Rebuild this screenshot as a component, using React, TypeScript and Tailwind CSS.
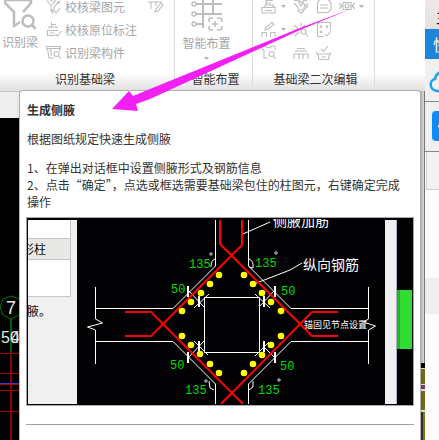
import React from "react";

interface GlyphProps {
    children: React.ReactNode;
    className?: string;
    viewBox?: string;
}

function Glyph({ children, className = "h-4 w-4", viewBox = "0 0 16 16" }: GlyphProps) {
    return (
        <svg
            viewBox={viewBox}
            className={`${className} shrink-0`}
            fill="none"
            stroke="#bdbdbd"
            strokeWidth="1.1"
            aria-hidden="true"
        >
            {children}
        </svg>
    );
}

function Caret() {
    return (
        <svg viewBox="0 0 5 3" className="h-[3px] w-[5px] shrink-0" fill="#b4b4b4" aria-hidden="true">
            <path d="M0 0h5L2.500 3z" />
        </svg>
    );
}

const checkItems = [
    {
        label: "校核梁图元",
        icon: <path d="M.5 1.500 5 6.500v5l1.500 2V10M4 2h4M10 1 6.500 6M13 2 8 8.500v4M8 12l2 2 4-5M12 5l2-3" />,
    },
    {
        label: "校核原位标注",
        icon: <path d="M5.500 0v6M5.500 2.500H10M3 6.500V5h8v1.500M.5 8.500h12M1.500 8.500v5H9M4 11h4M9.500 12l2 2 4-5" />,
    },
    {
        label: "识别梁构件",
        icon: (
            <>
                <path d="M.5 1.500h14v2h-14zM1.500 3.500l1.500 9.500h5M13.500 3.500V6M4.500 3.500l1 7" />
                <circle cx="10.500" cy="9" r="2.500" />
                <path d="m12.500 11 2.500 3" />
            </>
        ),
    },
];

const editRows = [
    [
        {
            label: "生成侧腋",
            menu: true,
            icon: <path d="M5 6V1.500h7M5 4h5M3 8.500 4.500 6H12v2.500M1 8.500h13v5.500H1zM4 11.500h7M11 6l3 2.500" />,
        },
        { label: "生成梁加腋", icon: <path d="M1 1.500h4L8 7l3-5.500h3M1 4l4 4v4l3 2 3-2V8l4-3.500M6 1.500c3 3 5 2 6 5M6 11h5M15 7l-3 3" /> },
        { label: "应用同名", icon: <path d="M4 .5h8l3 3v7l-3 3H1.500v-10zM4 6h8M4 9h8" /> },
        {
            label: "设置支座",
            menu: true,
            icon: (
                <>
                    <path d="M4 3.500h8v7H4zM0 4l3 3-3 3M16 4l-3 3 3 3M1 7h3M12 7h3" />
                    <circle cx="8" cy="7" r="2" />
                </>
            ),
        },
    ],
    [
        { label: "重提梁跨", menu: true, icon: <path d="M1 15v-4.500h4.500M9.500 10.500H14V15M5.500 15v-4.500M9.500 15v-4.500M4 8l1-3 6-4.500 2 2L7 7z" /> },
        {
            label: "查改标高",
            icon: (
                <>
                    <path d="m1 3 4 4M8 1v4M0 8h5M2 14l4-4M12 3 9 6" />
                    <circle cx="10.500" cy="9.500" r="2.500" />
                    <path d="m12.500 11.500 2.500 3" />
                </>
            ),
        },
        {
            label: "梁跨校核",
            icon: (
                <>
                    <path d="M8 14.500H1.500v-14h13V8M9 12l2 2 4-5" />
                    <circle cx="5" cy="4.500" r=".8" />
                    <circle cx="11" cy="4.500" r=".8" />
                    <circle cx="5" cy="10" r=".8" />
                </>
            ),
        },
    ],
    [
        {
            label: "查看支座",
            icon: (
                <>
                    <path d="M1 1h3l2 1.500h3L11 1h3v4M1 1v3l2 1v8h4" />
                    <circle cx="10.500" cy="9" r="2.500" />
                    <path d="m12.500 11 2 3" />
                </>
            ),
        },
        { label: "生成架立筋", icon: <path d="M4 3.500h8M2 6h12M1 14V9h14v5M6 14V9M10 14V9" /> },
        { label: "检查配筋", icon: <path d="M.5 7v2h14V7M2 9l1 5.500h9.500l1-5.500M5 12h5M5 4l2.500 2.500L12 1" /> },
    ],
];

const captionClass = "text-center text-xs leading-4 text-[#333333]";

function Ribbon() {
    return (
        <header className="flex h-[91px] shrink-0 overflow-hidden bg-white bg-gradient-to-b from-white from-80% to-[#e0e0e0]">
            <section className="mb-1 flex w-[175px] shrink-0 flex-col border-r border-[#dcdcdc]">
                <div className="-mt-[5px] flex grow">
                    <button className="flex w-[40px] flex-col items-center whitespace-nowrap pt-1 text-xs text-[#a6a6a6]">
                        <Glyph className="h-[31px] w-8" viewBox="0 0 32 31">
                            <path d="M1 0v4l9 9v14l6-4M27 0v4l-8 9M1 1h26" strokeWidth="2.500" />
                            <circle cx="24" cy="22" r="5.500" strokeWidth="2.500" />
                            <path d="m28 26 4 4" strokeWidth="2.500" />
                        </Glyph>
                        <span className="mt-1 leading-4">识别梁</span>
                    </button>
                    <div className="ml-1.5 flex flex-col">
                        {checkItems.map(({ label, icon }) => (
                            <button
                                key={label}
                                className="flex h-[23px] items-center gap-[3px] whitespace-nowrap text-xs text-[#a6a6a6]"
                            >
                                <Glyph>{icon}</Glyph>
                                {label}
                            </button>
                        ))}
                    </div>
                    <button aria-label="编辑" className="ml-auto mr-2.5 flex h-[23px] items-center">
                        <Glyph>
                            <path d="M0 3h14M3 3v7M8 3v4M7 13l1-3 5-6 2 2-5 6z" />
                        </Glyph>
                    </button>
                </div>
                <h2 className={`${captionClass} pr-1`}>识别基础梁</h2>
            </section>

            <section className="mb-1 flex w-[78px] shrink-0 flex-col border-r border-[#dcdcdc]">
                <button className="flex grow flex-col items-center pr-3.5 text-xs text-[#a6a6a6]">
                    <Glyph className="h-[31px] w-8" viewBox="0 0 32 31">
                        <path d="M5 4h26M5 14h26M5 24h8M12 0v28M22 0v14" strokeWidth="2" />
                        <g fill="white" strokeWidth="1.500">
                            <circle cx="3" cy="4" r="2" />
                            <circle cx="3" cy="14" r="2" />
                            <circle cx="3" cy="24" r="2" />
                        </g>
                        <path
                            d="M22 18h-2q-2 0-2 2v2M26 18h2q3 0 3 2v2M18 26v2q0 2 2 2h2M26 30h2q3 0 3-2v-2M24 21v6M21 24h6"
                            strokeWidth="1.500"
                        />
                    </Glyph>
                    <span className="mt-1 mb-1.5 leading-4">智能布置</span>
                    <Caret />
                </button>
                <h2 className={`${captionClass} pl-1`}>智能布置</h2>
            </section>

            <section className="mb-1 flex w-[122px] shrink-0 flex-col border-r border-[#dcdcdc]">
                <div className="-mt-[5px] flex grow flex-col pl-2">
                    {editRows.map((row, i) => (
                        <div key={i} className="flex h-[23px] items-center">
                            {row.map(({ label, icon, menu }, j) => (
                                <button
                                    key={label}
                                    aria-label={label}
                                    className={`flex items-center gap-1 ${j === 0 ? "w-8" : "w-[23px]"}`}
                                >
                                    <Glyph>{icon}</Glyph>
                                    {menu && <Caret />}
                                </button>
                            ))}
                        </div>
                    ))}
                </div>
                <h2 className={`${captionClass} pl-1`}>基础梁二次编辑</h2>
            </section>
        </header>
    );
}

function ModelView() {
    return (
        <svg
            viewBox="0 118 20 322"
            className="h-[322px] w-5"
            fill="none"
            fontFamily="'Liberation Sans', sans-serif"
            aria-hidden="true"
        >
            <path d="M11 319v34" stroke="#075c07" strokeWidth="2" />
            <path d="m11 296 8 3 4 8-4 8-8 4-8-4-3-8 3-8z" stroke="#087508" />
            <g stroke="#a40000">
                <path d="M0 353.500h20M0 373.500h20M0 390.500h20M0 411.500h20" />
                <path d="M11 353v87" strokeWidth="2" stroke="#8b0000" />
                <path d="M0 384.500h20" />
            </g>
            <path d="M0 383.500h20" stroke="#4934c8" />
            <g fill="#e8e8e8">
                <text x="6" y="314" fontSize="18">7</text>
                <text x="1" y="343" fontSize="16">5</text>
                <text x="10" y="343" fontSize="16">0</text>
                <text x="11" y="343" fontSize="16">4</text>
            </g>
        </svg>
    );
}

const bars = [
    [219, 275], [210, 284], [201, 293], [191, 302], [182, 311],
    [244, 275], [253, 284], [262, 293], [271, 302], [281, 311],
    [182, 336], [191, 345], [200, 354], [210, 364], [219, 373],
    [281, 336], [271, 345], [262, 355], [253, 364], [244, 373],
];

const dimensions: [number, number, string][] = [
    [189, 268, "135"],
    [255, 267, "135"],
    [171, 293, "50"],
    [281, 295, "50"],
    [170, 369, "50"],
    [280, 370, "50"],
    [185, 394, "135"],
    [258, 394, "135"],
];

const degreeMarks = [[211, 254], [276, 253], [206, 381], [279, 380]];

function HaunchDiagram() {
    return (
        <svg
            viewBox="28 219 384 185"
            className="block w-full bg-[#020204]"
            fill="none"
            fontFamily="'Noto Sans CJK SC', sans-serif"
            role="img"
            aria-label="侧腋配筋示意图"
        >
            <path d="M28 220h49v184H28z" fill="#f0f0f0" />
            <path d="M28 220h42v76H28z" fill="#ffffff" />
            <path d="M28 238h42v22H28z" fill="#e8e8e4" />
            <path d="M28 238.500h42M28 259.500h42M28 296.500h43M70.500 220v77" stroke="#c4c6ce" />
            <g fill="#111111" fontSize="12">
                <text x="22" y="254">形柱</text>
                <text x="27" y="316">腋。</text>
            </g>
            <path d="M385 220h11v184h-11z" fill="#f0f0f0" />
            <path d="M396.500 220v184" stroke="#aab4c0" />
            <path d="M397 290h15v59h-15z" fill="#2fdc2f" />
            <path d="M397 290h3v59h-3z" fill="#24b424" />

            <g stroke="#ffffff">
                <path d="M215.500 220v46L173 308.500H95M248.500 220v46l42.500 42.500h77.500" />
                <path d="M95 341.500h78l42.500 42.500v20M368.500 341.500H291L248.500 384v20" />
                <path d="M95.500 287v32l7 4-15 4 8 3v34M368.500 287v32l-5 3 12 4-7 4v34" />
                <path d="M204.500 297.500h55v55h-55z" />
                <path d="m243 234 27-12M254 284l36-14 12-7" />
                <path d="m188 290 16 17M194 308l15-14M275 290l-16 17M270 308l-15-14" />
                <path d="m188 358 16-17M194 341l14 14M275 358l-12-12M269 342l-14 14" />
                <path d="M215 259q-4 1-4 8M249 259q5 2 4 9l-4-1M209 381l1 7 4 2M253 381v6l-4 3" />
                <path
                    d="M188 286v11M199 296v11M275 286v11M264 296v11M199 341v11M188 352v11M264 341v11M275 352v11"
                    strokeWidth="2"
                />
            </g>
            <g stroke="#ff0000" strokeWidth="2">
                <path d="M220 220v24l92 92h26M242 220v25l-91 91h-26" />
                <path d="M125 312h26l92 92M338 312h-26l-91 92" />
            </g>
            <g fill="#ffff00">
                {bars.map(([cx, cy]) => (
                    <circle key={`${cx}-${cy}`} cx={cx} cy={cy} r="3.300" />
                ))}
            </g>
            <g fill="#00dc00" fontSize="12" fontFamily="'Liberation Mono', monospace">
                {dimensions.map(([x, y, value]) => (
                    <text key={`${x}-${y}`} x={x} y={y}>{value}</text>
                ))}
            </g>
            <g stroke="#d8d8e8">
                {degreeMarks.map(([cx, cy]) => (
                    <circle key={`${cx}-${cy}`} cx={cx} cy={cy} r="1.200" />
                ))}
            </g>
            <g fill="#ffffff">
                <text x="273" y="226" fontSize="14">侧腋加筋</text>
                <text x="303" y="270" fontSize="14">纵向钢筋</text>
                <text x="304" y="328" fontSize="9">锚固见节点设置</text>
            </g>
        </svg>
    );
}

function HelpTip() {
    return (
        <div
            role="tooltip"
            className="absolute top-[90px] right-1 bottom-0 left-[19px] overflow-hidden rounded-t-sm border border-b-0 border-[#b0b0b0] bg-white px-1.5 pt-2.5 text-xs leading-[17px] text-[#333333] shadow-md"
        >
            <div className="pr-1.5 pl-px">
                <h3 className="font-bold">生成侧腋</h3>
                <p className="mt-3">根据图纸规定快速生成侧腋</p>
                <p className="mt-3">1、在弹出对话框中设置侧腋形式及钢筋信息</p>
                <p>2、点击“确定”，点选或框选需要基础梁包住的柱图元，右键确定完成操作</p>
            </div>
            <div className="mt-[7px] border border-[#a8a8ac] bg-[#020204] p-px">
                <HaunchDiagram />
            </div>
            <hr className="mt-[18px] border-[#a0a0a0]" />
        </div>
    );
}

function Pointer() {
    return (
        <svg
            viewBox="0 0 260 112"
            className="pointer-events-none absolute top-0 left-[100px] h-28 w-[260px]"
            fill="#f41ff4"
            aria-hidden="true"
        >
            <path d="m12 109 17-18 4 5 17-7L200 28l52-19.500-52 21.500L50 99l-14 5 2 7z" />
        </svg>
    );
}

function SideWindow() {
    return (
        <aside className="flex w-3.5 shrink-0 flex-col overflow-hidden bg-[#fcfcfc] text-base">
            <div className="h-[29px] shrink-0 whitespace-nowrap bg-gradient-to-b from-[#eee9e7] to-[#e5e1df] pt-1 pl-[11px] leading-6 text-black">
                主
            </div>
            <div className="h-[30px] shrink-0 whitespace-nowrap bg-[#1a87dc] pl-2 leading-[30px] text-white">
                快
            </div>
            <div className="h-[43px] shrink-0 border-b border-[#85858c] bg-[#f0f0f0] pt-2.5 pl-1">
                <svg viewBox="0 0 30 24" className="h-6 w-[30px]" fill="none" stroke="#16a3f0" strokeWidth="2.500" aria-hidden="true">
                    <path d="M24 22H8C0 21 0 11 6 10 7 3 16 0 20 7c7 0 10 13 4 15z" />
                </svg>
            </div>
            <div className="h-[50px] shrink-0 border-b border-[#85858c] bg-[#f0f0f0] pt-[9px] pl-[7px]">
                <div className="flex h-[30px] w-[30px] items-center rounded bg-[#0a8cff] pl-1.5">
                    <span className="h-1 w-1 rounded-full bg-white" />
                </div>
            </div>
            <div className="ml-px h-[38px] shrink-0 border-b border-l border-[#d0d0d4] bg-[#f2f2f2]" />
            <div className="h-[88px] shrink-0" />
            <div className="h-9 shrink-0 bg-[#efefef]" />
        </aside>
    );
}

function ViewScroll() {
    return (
        <div className="flex w-[5px] shrink-0 flex-col">
            <div className="h-[272px] shrink-0 border-r border-[#777780] bg-gradient-to-r from-[#aaaaaa] to-[#dcdcdc]" />
            <div className="h-[5px] shrink-0 bg-black" />
            <div className="h-[17px] shrink-0 border-y border-[#dedede] bg-[#6f7019]" />
            <div className="h-1 shrink-0 bg-[#803c60]" />
            <div className="h-[23px] shrink-0 border-y-2 border-[#dedede] bg-[#6f7019]" />
            <div className="grow border-r-2 border-[#77771c] bg-[#303028]" />
        </div>
    );
}

export default function App() {
    return (
        <div className="flex h-screen min-h-[440px] overflow-hidden bg-black font-['Noto_Sans_CJK_SC',sans-serif]">
            <main className="relative flex min-w-0 grow flex-col">
                <Ribbon />
                <div className="flex grow justify-between">
                    <div className="flex w-5 flex-col">
                        <div className="h-[27px] shrink-0 border-t border-[#c4c4c4] bg-[#efefef]" />
                        <ModelView />
                    </div>
                    <ViewScroll />
                </div>
                <HelpTip />
                <Pointer />
            </main>
            <SideWindow />
        </div>
    );
}
